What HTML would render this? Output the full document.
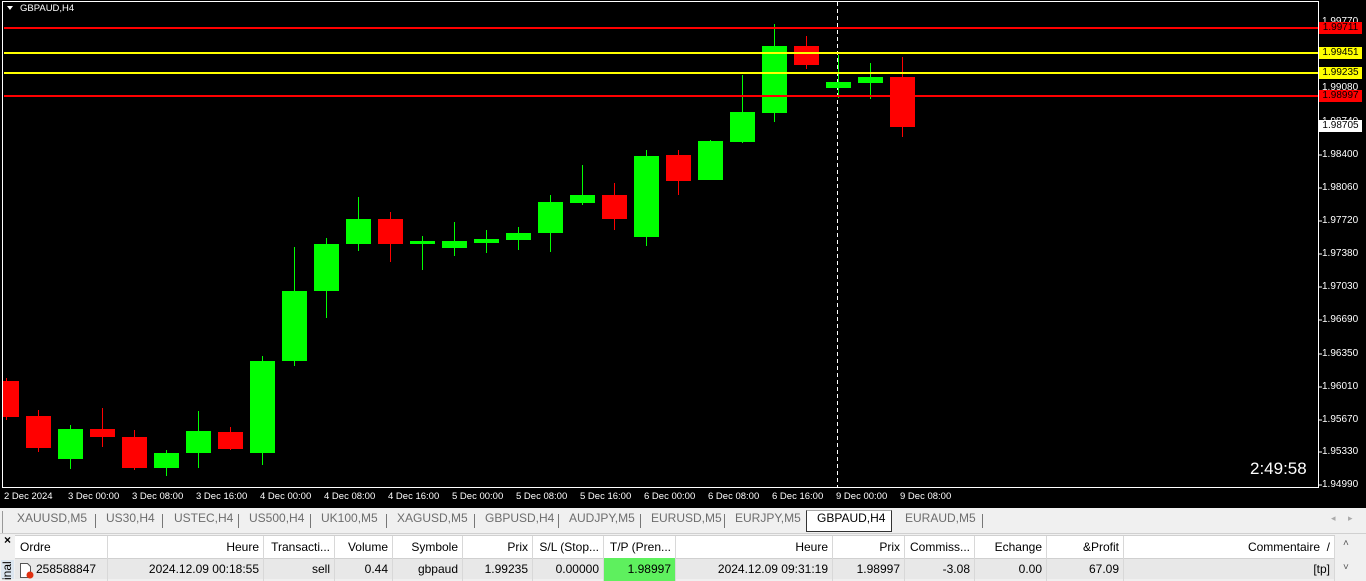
<!DOCTYPE html>
<html><head><meta charset="utf-8"><style>
body{margin:0;width:1366px;height:579px;overflow:hidden;background:#f0f0f0;font-family:"Liberation Sans",sans-serif;position:relative}
.a{position:absolute}
.pl{position:absolute;left:1322px;font-size:10px;color:#fff;line-height:12px}
.bx{position:absolute;left:1319px;width:43px;height:12px;font-size:10px;line-height:12px;text-align:center;color:#000}
.tl{position:absolute;top:491px;font-size:9.5px;color:#fff}
.tab{position:absolute;top:511px;font-size:12px;color:#6d6d6d}
.sep{position:absolute;top:514px;width:1px;height:14px;background:#777}
.c{position:absolute;height:23px;line-height:23px;font-size:12px;color:#000;border-right:1px solid #d8d8d8;box-sizing:border-box;padding:0 4px;white-space:nowrap;overflow:hidden}
.r{text-align:right}
</style></head><body>
<div class="a" style="left:0;top:0;width:1366px;height:508px;background:#000"></div>
<svg class="a" style="left:0;top:0" width="1366" height="508">
<rect x="2.5" y="1.5" width="1316" height="486" fill="none" stroke="#fff" stroke-width="1"/>
<polygon points="7,6 13,6 10,10" fill="#fff"/>
<g fill="none">
<line x1="837.5" y1="2" x2="837.5" y2="487" stroke="#fff" stroke-dasharray="4,3"/>
</g>
<g id="c"></g>
<rect x="4" y="27" width="1314" height="2" fill="#f00"/>
<rect x="4" y="52" width="1314" height="2" fill="#ff0"/>
<rect x="4" y="72" width="1314" height="2" fill="#ff0"/>
<rect x="4" y="95" width="1314" height="2" fill="#f00"/>
<g stroke="#fff">
<line x1="1318" y1="155" x2="1322" y2="155"/><line x1="1318" y1="188" x2="1322" y2="188"/>
<line x1="1318" y1="221" x2="1322" y2="221"/><line x1="1318" y1="254" x2="1322" y2="254"/>
<line x1="1318" y1="287" x2="1322" y2="287"/><line x1="1318" y1="320" x2="1322" y2="320"/>
<line x1="1318" y1="354" x2="1322" y2="354"/><line x1="1318" y1="387" x2="1322" y2="387"/>
<line x1="1318" y1="420" x2="1322" y2="420"/><line x1="1318" y1="452" x2="1322" y2="452"/>
<line x1="1318" y1="485" x2="1322" y2="485"/>
</g>
</svg>
<div class="a" style="left:20px;top:3px;font-size:9.5px;color:#fff">GBPAUD,H4</div>
<div class="pl" style="top:16px">1.99770</div>
<div class="pl" style="top:82px">1.99080</div>
<div class="pl" style="top:116px">1.98740</div>
<div class="pl" style="top:149px">1.98400</div>
<div class="pl" style="top:182px">1.98060</div>
<div class="pl" style="top:215px">1.97720</div>
<div class="pl" style="top:248px">1.97380</div>
<div class="pl" style="top:281px">1.97030</div>
<div class="pl" style="top:314px">1.96690</div>
<div class="pl" style="top:348px">1.96350</div>
<div class="pl" style="top:381px">1.96010</div>
<div class="pl" style="top:414px">1.95670</div>
<div class="pl" style="top:446px">1.95330</div>
<div class="pl" style="top:479px">1.94990</div>
<div class="bx" style="top:22px;background:#f00">1.99711</div>
<div class="bx" style="top:47px;background:#ff0">1.99451</div>
<div class="bx" style="top:67px;background:#ff0">1.99235</div>
<div class="bx" style="top:90px;background:#f00">1.98997</div>
<div class="bx" style="top:120px;background:#fff">1.98705</div>
<div class="a" style="left:1250px;top:459px;font-size:17px;color:#fff">2:49:58</div>
<div class="tl" style="left:4px">2 Dec 2024</div>
<div class="tl" style="left:68px">3 Dec 00:00</div>
<div class="tl" style="left:132px">3 Dec 08:00</div>
<div class="tl" style="left:196px">3 Dec 16:00</div>
<div class="tl" style="left:260px">4 Dec 00:00</div>
<div class="tl" style="left:324px">4 Dec 08:00</div>
<div class="tl" style="left:388px">4 Dec 16:00</div>
<div class="tl" style="left:452px">5 Dec 00:00</div>
<div class="tl" style="left:516px">5 Dec 08:00</div>
<div class="tl" style="left:580px">5 Dec 16:00</div>
<div class="tl" style="left:644px">6 Dec 00:00</div>
<div class="tl" style="left:708px">6 Dec 08:00</div>
<div class="tl" style="left:772px">6 Dec 16:00</div>
<div class="tl" style="left:836px">9 Dec 00:00</div>
<div class="tl" style="left:900px">9 Dec 08:00</div>
<!-- tabs -->
<div class="a" style="left:0;top:510px;width:1366px;height:23px;background:#f0f0f0;border-bottom:1px solid #d0d0d0"></div>
<div class="a" style="left:2px;top:511px;width:1px;height:22px;background:#999"></div>
<div class="tab" style="left:17px">XAUUSD,M5</div><div class="sep" style="left:95px"></div>
<div class="tab" style="left:106px">US30,H4</div><div class="sep" style="left:162px"></div>
<div class="tab" style="left:174px">USTEC,H4</div><div class="sep" style="left:238px"></div>
<div class="tab" style="left:249px">US500,H4</div><div class="sep" style="left:310px"></div>
<div class="tab" style="left:321px">UK100,M5</div><div class="sep" style="left:386px"></div>
<div class="tab" style="left:397px">XAGUSD,M5</div><div class="sep" style="left:474px"></div>
<div class="tab" style="left:485px">GBPUSD,H4</div><div class="sep" style="left:558px"></div>
<div class="tab" style="left:569px">AUDJPY,M5</div><div class="sep" style="left:640px"></div>
<div class="tab" style="left:651px">EURUSD,M5</div><div class="sep" style="left:724px"></div>
<div class="tab" style="left:735px">EURJPY,M5</div>
<div class="a" style="left:806px;top:510px;width:86px;height:22px;background:#fff;border:1px solid #333;border-top:1px solid #aaa;box-sizing:border-box"></div>
<div class="tab" style="left:817px;color:#000">GBPAUD,H4</div>
<div class="tab" style="left:905px">EURAUD,M5</div><div class="sep" style="left:982px"></div>
<div class="a" style="left:1331px;top:513px;font-size:9px;color:#aaa">◂&nbsp;&nbsp;&nbsp;&nbsp;&nbsp;▸</div>
<!-- terminal -->
<div class="a" style="left:0;top:534px;width:15px;height:45px;background:#f0f0f0"></div>
<div class="a" style="left:4px;top:533px;font-size:12px;font-weight:bold">×</div>
<div class="a" style="left:1px;top:560px;width:13px;height:19px;background:#dce6f0"></div>
<div class="a" style="left:-3px;top:563px;font-size:12px;transform:rotate(-90deg);transform-origin:center;width:20px">inal</div>
<div class="a" style="left:15px;top:535px;width:1320px;height:24px;background:#fff;border-top:1px solid #d0d0d0;border-bottom:1px solid #d0d0d0;box-sizing:border-box"></div>
<div class="a" style="left:15px;top:559px;width:1320px;height:20px;background:#e8e8e8"></div>
<div class="a" style="left:1335px;top:535px;width:31px;height:44px;background:#f0f0f0"></div>
<div class="a" style="left:1343px;top:538px;font-size:10px;color:#555">˄</div>
<div class="a" style="left:1343px;top:562px;font-size:10px;color:#555">˅</div>
<div style="position:absolute;top:536px;left:0">
<div class="c" style="left:16px;width:92px">Ordre</div>
<div class="c r" style="left:108px;width:156px">Heure</div>
<div class="c r" style="left:264px;width:71px">Transacti...</div>
<div class="c r" style="left:335px;width:58px">Volume</div>
<div class="c r" style="left:393px;width:70px">Symbole</div>
<div class="c r" style="left:463px;width:70px">Prix</div>
<div class="c r" style="left:533px;width:71px">S/L (Stop...</div>
<div class="c r" style="left:604px;width:72px">T/P (Pren...</div>
<div class="c r" style="left:676px;width:157px">Heure</div>
<div class="c r" style="left:833px;width:72px">Prix</div>
<div class="c r" style="left:905px;width:70px">Commiss...</div>
<div class="c r" style="left:975px;width:72px">Echange</div>
<div class="c r" style="left:1047px;width:77px">&amp;Profit</div>
<div class="c r" style="left:1124px;width:211px">Commentaire&nbsp;&nbsp;/</div>
</div>
<div style="position:absolute;top:558px;left:0">
<div class="c" style="left:16px;width:92px;padding-left:20px">258588847</div>
<div class="c r" style="left:108px;width:156px">2024.12.09 00:18:55</div>
<div class="c r" style="left:264px;width:71px">sell</div>
<div class="c r" style="left:335px;width:58px">0.44</div>
<div class="c r" style="left:393px;width:70px">gbpaud</div>
<div class="c r" style="left:463px;width:70px">1.99235</div>
<div class="c r" style="left:533px;width:71px">0.00000</div>
<div class="c r" style="left:604px;width:72px;background:#5ef05e">1.98997</div>
<div class="c r" style="left:676px;width:157px">2024.12.09 09:31:19</div>
<div class="c r" style="left:833px;width:72px">1.98997</div>
<div class="c r" style="left:905px;width:70px">-3.08</div>
<div class="c r" style="left:975px;width:72px">0.00</div>
<div class="c r" style="left:1047px;width:77px">67.09</div>
<div class="c r" style="left:1124px;width:211px">[tp]</div>
</div>
<svg class="a" style="left:19px;top:562px" width="16" height="17"><path d="M1.5 1.5h7l3 3v11h-10z" fill="#fff" stroke="#555"/><circle cx="11" cy="13" r="3.5" fill="#e03010"/></svg>
<script>
var d=[[381,417,378,420,0],[416,448,410,452,0],[429,459,425,469,1],[429,437,408,447,0],[437,468,430,470,0],[453,468,450,476,1],[431,453,411,468,1],[432,449,427,450,0],[361,453,356,465,1],[291,361,247,366,1],[244,291,238,318,1],[219,244,197,251,1],[219,244,212,262,0],[241,244,236,270,1],[241,248,222,256,1],[239,243,230,253,1],[233,240,227,250,1],[202,233,195,252,1],[195,203,165,205,1],[195,219,183,230,0],[156,237,150,246,1],[155,181,150,195,0],[141,180,140,180,1],[112,142,75,143,1],[46,113,24,122,1],[46,65,36,69,0],[82,88,55,98,1],[77,83,63,99,1],[77,127,57,137,0]];
var s='';d.forEach(function(c,i){var x=774-32*(24-i);var col=c[4]?'#00ff00':'#ff0000';var l=Math.max(x-12,3);var w=x+13-l;
s+='<line x1="'+(x+.5)+'" y1="'+c[2]+'" x2="'+(x+.5)+'" y2="'+c[3]+'" stroke="'+col+'"/>';
s+='<rect x="'+l+'" y="'+c[0]+'" width="'+w+'" height="'+Math.max(c[1]-c[0],2)+'" fill="'+col+'"/>';});
document.getElementById('c').innerHTML=s;
</script>
</body></html>
